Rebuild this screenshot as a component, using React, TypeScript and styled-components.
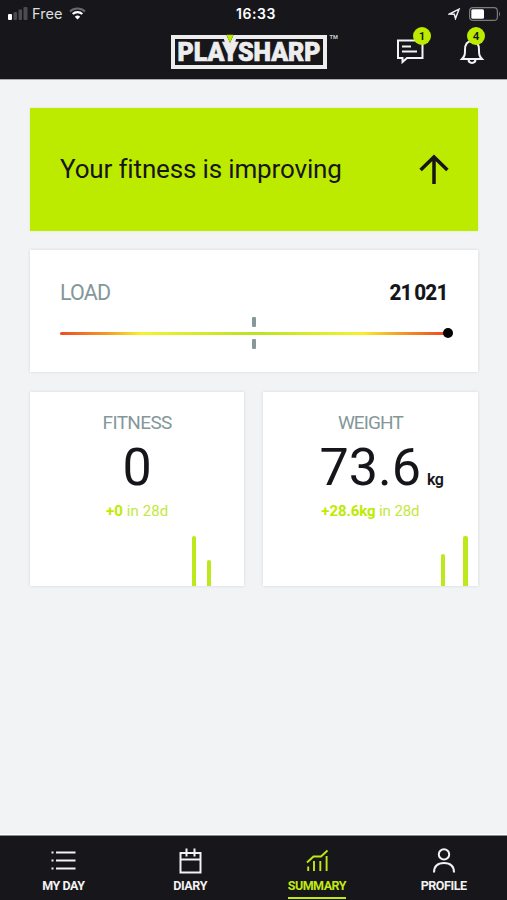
import React from "react";
import styled, { createGlobalStyle } from "styled-components";

const lime = "#bdeb00";
const ink = "#16161a";
const slate = "#84979a";

const GlobalStyle = createGlobalStyle`
  * { box-sizing: border-box; }
  body { margin: 0; background: #f1f3f5; font-family: Roboto, "Noto Sans", sans-serif; color: ${ink}; }
  svg { display: block; }
`;

const Screen = styled.div`
  width: 507px;
  height: 900px;
  display: flex;
  flex-direction: column;
  overflow: hidden;
  background: #f1f3f5;
`;

const Header = styled.header`
  height: 80px;
  flex: none;
  background: #17171b;
  border-bottom: 1px solid #a9abad;
  color: #fff;
`;

const StatusBar = styled.div`
  height: 28px;
  display: grid;
  grid-template-columns: 1fr auto 1fr;
  padding: 0 6px 0 8px;
  align-items: center;
  font-family: Inter, sans-serif;
`;

const Carrier = styled.div`
  display: flex;
  align-items: center;
  height: 26px;
  align-self: start;
  font-size: 14.5px;
  letter-spacing: 0.05px;
  color: #dededf;
  svg:first-child { margin-right: 4px; }
  svg:last-child { margin-left: 7px; }
`;

const Clock = styled.div`
  font-size: 14px;
  height: 26px;
  line-height: 27px;
  align-self: start;
  font-weight: 600;
  letter-spacing: 0.55px;
  padding-left: 3px;
`;

const StatusRight = styled.div`
  display: flex;
  justify-content: flex-end;
  align-items: center;
  gap: 8px;
  height: 27px;
  align-self: start;
`;

const Brand = styled.div`
  height: 51px;
  display: grid;
  grid-template-columns: 170px 168px 1fr;
  align-items: start;
`;

const Logo = styled.svg`
  grid-column: 2;
  margin-top: 6px;
`;

const Actions = styled.div`
  display: flex;
  justify-content: flex-end;
  gap: 31px;
  padding: 8px 20px 0 0;
`;

const Action = styled.div`
  position: relative;
  width: 30px;
  height: 32px;
`;

const Badge = styled.span<{ $left: number }>`
  position: absolute;
  top: -9px;
  left: ${(p) => p.$left}px;
  width: 18px;
  height: 18px;
  border-radius: 50%;
  background: ${lime};
  color: ${ink};
  font-size: 11.5px;
  font-weight: 600;
  line-height: 18px;
  text-align: center;
`;

const Content = styled.main`
  flex: 1;
  padding: 28px 29.5px 0 30px;
`;

const Banner = styled.section`
  height: 123px;
  background: ${lime};
  display: flex;
  align-items: center;
  justify-content: space-between;
  padding: 0 29px 2px 30px;
  box-shadow: 0 0 2px #dfe7c6;
`;

const BannerText = styled.h1`
  margin: 0;
  font-size: 26px;
  font-weight: 400;
  letter-spacing: -0.15px;
`;

const Card = styled.section`
  background: #fff;
  box-shadow: 0 0 3px rgba(40, 55, 60, 0.13);
`;

const LoadCard = styled(Card)`
  height: 122px;
  margin-top: 19px;
  padding: 30px 29.5px 0 30px;
`;

const LoadHead = styled.div`
  display: flex;
  justify-content: space-between;
  line-height: 25px;
`;

const LoadLabel = styled.span`
  font-size: 21.5px;
  letter-spacing: -0.8px;
  color: ${slate};
`;

const LoadValue = styled.strong`
  font-size: 21.5px;
  font-weight: 800;
  letter-spacing: -0.8px;
  word-spacing: -2px;
  transform: scaleX(0.96);
  transform-origin: right;
`;

const Gauge = styled.div`
  position: relative;
  height: 32px;
  margin-top: 12px;
  display: grid;
  align-content: center;
`;

const GaugeLine = styled.div`
  height: 3px;
  border-radius: 2px;
  background: linear-gradient(90deg, #f04a23 0%, #f39a28 12%, #f8f12c 21%, #e5ef2b 28%, #b9e226 50%, #e0ee28 69%, #f8ef2c 78%, #f39a28 88%, #ec4420 100%);
`;

const Tick = styled.span<{ $top: number }>`
  position: absolute;
  left: 192px;
  top: ${(p) => p.$top}px;
  width: 4px;
  height: 10px;
  border-radius: 1px;
  background: #87989b;
`;

const Knob = styled.span`
  position: absolute;
  right: -5px;
  top: 11px;
  width: 10px;
  height: 10px;
  border-radius: 50%;
  background: #000;
`;

const Pair = styled.div`
  display: grid;
  grid-template-columns: 1fr 1fr;
  gap: 19px;
  margin-top: 20px;
`;

const Metric = styled(Card)`
  height: 194px;
  display: flex;
  flex-direction: column;
  align-items: center;
`;

const MetricTitle = styled.h2<{ $spacing: number }>`
  margin: 19px 0 0;
  font-size: 19px;
  line-height: 24px;
  font-weight: 400;
  letter-spacing: ${(p) => p.$spacing}px;
  color: ${slate};
`;

const Reading = styled.div<{ $indent: number }>`
  height: 64px;
  line-height: 65px;
  font-size: 52px;
  letter-spacing: 0;
  padding-left: ${(p) => p.$indent}px;
  white-space: nowrap;
`;

const Unit = styled.span`
  font-size: 16px;
  font-weight: 600;
  letter-spacing: -0.6px;
  margin-left: 6px;
`;

const Change = styled.div<{ $spacing: number }>`
  line-height: 24px;
  font-size: 15px;
  letter-spacing: ${(p) => p.$spacing}px;
  color: #c3e83c;
  b { color: ${lime}; font-weight: 700; }
`;

const Bars = styled.div<{ $gap: number; $right: number }>`
  align-self: flex-end;
  margin-top: auto;
  height: 51px;
  display: flex;
  align-items: flex-end;
  gap: ${(p) => p.$gap}px;
  padding-right: ${(p) => p.$right}px;
`;

const Bar = styled.i<{ $height: number }>`
  width: 4.5px;
  height: ${(p) => p.$height}px;
  border-radius: 2px 2px 0 0;
  background: #bde81b;
`;

const Nav = styled.nav`
  height: 65px;
  flex: none;
  border-top: 1px solid #858b8e;
  box-shadow: 0 -1px 0 #fff;
  background: #17171b;
  display: grid;
  grid-template-columns: repeat(4, 1fr);
`;

const NavItem = styled.div<{ $active?: boolean }>`
  display: flex;
  flex-direction: column;
  align-items: center;
  padding-top: 12px;
  color: ${(p) => (p.$active ? "#c0e914" : "#f2f2f2")};
`;

const NavLabel = styled.span<{ $active?: boolean; $spacing: number }>`
  height: 23px;
  padding-top: 2px;
  font-size: 12.5px;
  font-weight: 700;
  line-height: 15px;
  letter-spacing: ${(p) => p.$spacing}px;
  border-bottom: 2px solid ${(p) => (p.$active ? "#c0e914" : "transparent")};
`;

const NavIcon = ({ children }: { children: React.ReactNode }) => (
  <svg width="28" height="28" viewBox="0 0 28 28" fill="none" stroke="currentColor" strokeWidth="2">
    {children}
  </svg>
);

const navItems = [
  {
    label: "MY DAY", spacing: -0.45,
    icon: <path d="M7 4.5h19.5M7 12.5h19.5M7 20.5h19.5M2.5 4.5h2M2.5 12.5h2M2.5 20.5h2" />,
  },
  {
    label: "DIARY", spacing: -0.35,
    icon: <path d="M4.5 5h20v19.5h-20zM4.5 11.5h20M10.5 .5v8M18.5 .5v8" />,
  },
  {
    label: "SUMMARY", spacing: -0.5, active: true,
    icon: <path d="M4 14.5l6.5-6h7.5l6.5-6M5.2 18.5v4.5M11 13v10M17.3 13v10M23.6 8v15" strokeWidth="1.9" />,
  },
  {
    label: "PROFILE", spacing: -0.45,
    icon: <><circle cx="14" cy="6.4" r="5.2" /><path d="M4 24.5c0-6.5 4-9.5 10-9.5s10 3 10 9.5" /></>,
  },
];

export default function App() {
  return (
    <>
      <GlobalStyle />
      <Screen>
        <Header>
          <StatusBar>
            <Carrier>
              <svg width="20" height="13" viewBox="0 0 20 13">
                <rect y="7" width="4" height="6" rx="1" fill="#fff" />
                <g fill="#4c4c50">
                  <rect x="5.5" y="5" width="3.5" height="8" rx="1" />
                  <rect x="10.5" y="2.5" width="3.5" height="10.5" rx="1" />
                  <rect x="15.5" width="4" height="13" rx="1" />
                </g>
              </svg>
              Free
              <svg width="17" height="13" viewBox="0 0 17 13" fill="none">
                <path d="M1 4.4a11 11 0 0 1 15 0" stroke="#69696c" strokeWidth="2" />
                <path d="M3.7 7a7 7 0 0 1 9.6 0" stroke="#fff" strokeWidth="2.2" />
                <path d="M5.8 9.7a4 4 0 0 1 5.4 0l-2.7 2.8z" fill="#fff" />
              </svg>
            </Carrier>
            <Clock>16:33</Clock>
            <StatusRight>
              <svg width="13" height="12" viewBox="0 0 13 12" fill="none" stroke="#eee" strokeWidth="1.5">
                <path d="M1.5 6L11 1.2 7.5 10.5 6.3 6.2z" />
              </svg>
              <svg width="32" height="14" viewBox="0 0 32 14">
                <rect x=".6" y=".6" width="27.8" height="12.8" rx="3.5" fill="none" stroke="#7b7b7e" strokeWidth="1.2" />
                <rect x="2.3" y="2.3" width="12.7" height="9.4" rx="1.5" fill="#fff" />
                <path d="M30 4.5q2 2.5 0 5z" fill="#7b7b7e" />
              </svg>
            </StatusRight>
          </StatusBar>
          <Brand>
            <Logo width="170" height="37" viewBox="0 0 170 37">
              <path d="M54 3H3v30h152V3H66" fill="none" stroke="#ededee" strokeWidth="4" />
              <path d="M52.5 1h4l3.5 8 3.5-8h4l-5 15h-5z" fill="#ededee" />
              <path d="M56.5 .8h7l-3.5 8z" fill={lime} />
              <text x="7.5" y="27.2" textLength="143" lengthAdjust="spacingAndGlyphs" fill="#ededee" stroke="#ededee" strokeWidth=".7" fontFamily="Roboto" fontWeight="900" fontSize="25.5">PLAYSHARP</text>
              <text x="159.5" y="5" fill="#ccc" fontFamily="Roboto" fontWeight="700" fontSize="5.5">TM</text>
            </Logo>
            <Actions>
              <Action>
                <svg width="30" height="32" viewBox="0 0 30 32" fill="none" stroke="#f4f4f4" strokeWidth="2">
                  <path d="M2 4.5h24.5v17.5H11l-4.5 4V22H2zM6 10.5h9M6 15.5h15" />
                </svg>
                <Badge $left={17}>1</Badge>
              </Action>
              <Action>
                <svg width="30" height="32" viewBox="0 0 30 32" fill="none" stroke="#f4f4f4" strokeWidth="2">
                  <path d="M5 23c3-3 3-5 3-9 0-6 2-9 7-9s7 3 7 9c0 4 0 6 3 9zM11.5 23.5c0 4.5 7 4.5 7 0" />
                </svg>
                <Badge $left={10}>4</Badge>
              </Action>
            </Actions>
          </Brand>
        </Header>

        <Content>
          <Banner>
            <BannerText>Your fitness is improving</BannerText>
            <svg width="30" height="32" viewBox="0 0 30 32" fill="none" stroke={ink} strokeWidth="3.5">
              <path d="M15 31V4M1.6 17L15 4l13.4 13" />
            </svg>
          </Banner>

          <LoadCard>
            <LoadHead>
              <LoadLabel>LOAD</LoadLabel>
              <LoadValue>21 021</LoadValue>
            </LoadHead>
            <Gauge>
              <GaugeLine />
              <Tick $top={0} />
              <Tick $top={22} />
              <Knob />
            </Gauge>
          </LoadCard>

          <Pair>
            <Metric>
              <MetricTitle $spacing={-0.65}>FITNESS</MetricTitle>
              <Reading $indent={0}>0</Reading>
              <Change $spacing={0.1}><b>+0</b> in 28d</Change>
              <Bars $gap={10.5} $right={33}>
                <Bar $height={50} />
                <Bar $height={26} />
              </Bars>
            </Metric>
            <Metric>
              <MetricTitle $spacing={-0.9}>WEIGHT</MetricTitle>
              <Reading $indent={22}>73.6<Unit>kg</Unit></Reading>
              <Change $spacing={-0.1}><b>+28.6kg</b> in 28d</Change>
              <Bars $gap={18} $right={10}>
                <Bar $height={32} />
                <Bar $height={50} />
              </Bars>
            </Metric>
          </Pair>
        </Content>

        <Nav>
          {navItems.map((item) => (
            <NavItem key={item.label} $active={item.active}>
              <NavIcon>{item.icon}</NavIcon>
              <NavLabel $active={item.active} $spacing={item.spacing}>{item.label}</NavLabel>
            </NavItem>
          ))}
        </Nav>
      </Screen>
    </>
  );
}
